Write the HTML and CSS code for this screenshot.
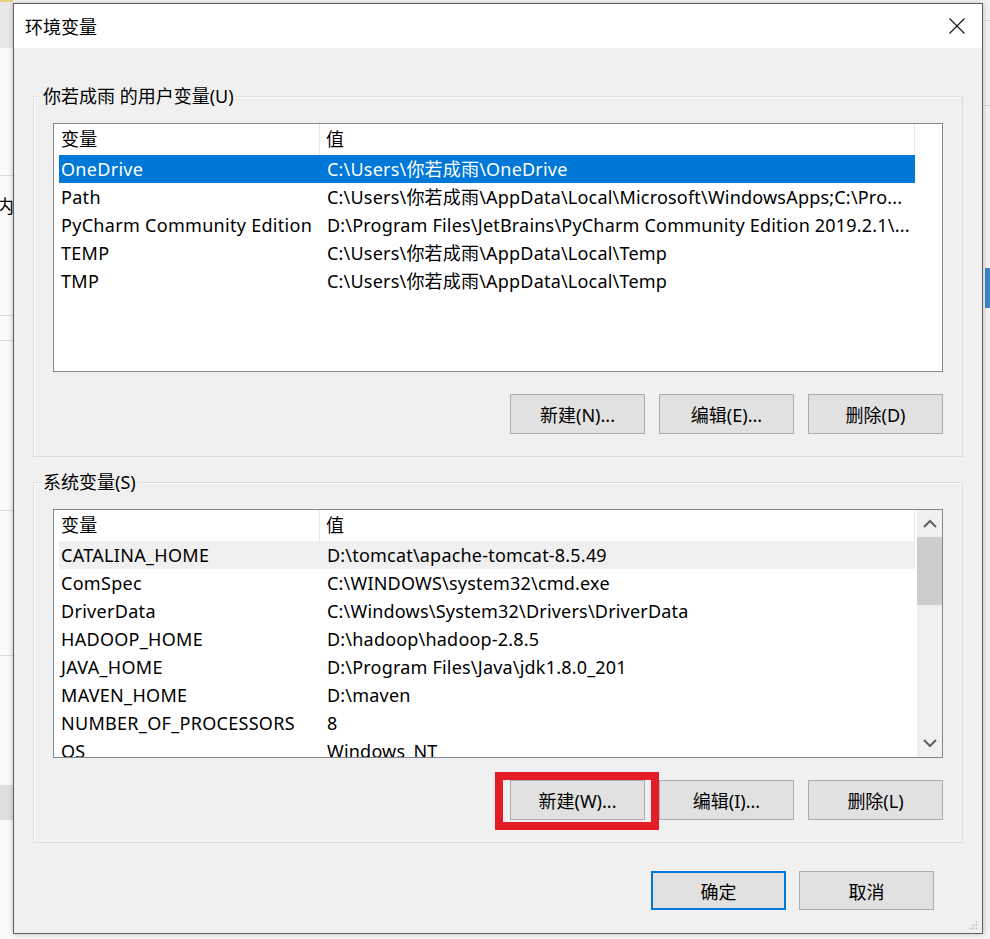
FILE: index.html
```html
<!DOCTYPE html>
<html lang="zh-CN">
<head>
<meta charset="utf-8">
<title>环境变量</title>
<link rel="stylesheet" href="styles.css">
</head>
<body>
<div class="desk">
  <div class="behind-left">
    <div class="bl-top"></div>
    <div class="bl-text"><span>L内</span></div>
  </div>
  <div class="dialog">
    <div class="titlebar">
      <span class="title">环境变量</span>
      <span class="close" aria-label="关闭">
        <svg width="16" height="16" viewBox="0 0 16 16"><path d="M0.5 0.5 L15.5 15.5 M15.5 0.5 L0.5 15.5" stroke="#111" stroke-width="1.1" fill="none"/></svg>
      </span>
    </div>
    <div class="content">
      <div class="group">
        <span class="group-label">你若成雨 的用户变量(U)</span>
        <div class="list">
          <div class="list-main">
            <div class="head">
              <div class="hcell c1">变量</div>
              <div class="hcell c2">值</div>
            </div>
            <div class="row selected"><div class="cell c1">OneDrive</div><div class="cell c2">C:\Users\你若成雨\OneDrive</div></div>
            <div class="row"><div class="cell c1">Path</div><div class="cell c2">C:\Users\你若成雨\AppData\Local\Microsoft\WindowsApps;C:\Pro...</div></div>
            <div class="row"><div class="cell c1">PyCharm Community Edition</div><div class="cell c2">D:\Program Files\JetBrains\PyCharm Community Edition 2019.2.1\...</div></div>
            <div class="row"><div class="cell c1">TEMP</div><div class="cell c2">C:\Users\你若成雨\AppData\Local\Temp</div></div>
            <div class="row"><div class="cell c1">TMP</div><div class="cell c2">C:\Users\你若成雨\AppData\Local\Temp</div></div>
          </div>
          <div class="scroll-space"></div>
        </div>
        <div class="buttons">
          <button class="btn">新建(N)...</button>
          <button class="btn">编辑(E)...</button>
          <button class="btn">删除(D)</button>
        </div>
      </div>

      <div class="group second">
        <span class="group-label">系统变量(S)</span>
        <div class="list">
          <div class="list-main">
            <div class="head">
              <div class="hcell c1">变量</div>
              <div class="hcell c2">值</div>
            </div>
            <div class="row hover"><div class="cell c1">CATALINA_HOME</div><div class="cell c2">D:\tomcat\apache-tomcat-8.5.49</div></div>
            <div class="row"><div class="cell c1">ComSpec</div><div class="cell c2">C:\WINDOWS\system32\cmd.exe</div></div>
            <div class="row"><div class="cell c1">DriverData</div><div class="cell c2">C:\Windows\System32\Drivers\DriverData</div></div>
            <div class="row"><div class="cell c1">HADOOP_HOME</div><div class="cell c2">D:\hadoop\hadoop-2.8.5</div></div>
            <div class="row"><div class="cell c1">JAVA_HOME</div><div class="cell c2">D:\Program Files\Java\jdk1.8.0_201</div></div>
            <div class="row"><div class="cell c1">MAVEN_HOME</div><div class="cell c2">D:\maven</div></div>
            <div class="row"><div class="cell c1">NUMBER_OF_PROCESSORS</div><div class="cell c2">8</div></div>
            <div class="row"><div class="cell c1">OS</div><div class="cell c2">Windows_NT</div></div>
          </div>
          <div class="scroll-space">
            <div class="scrollbar">
              <div class="arrow">
                <svg width="14" height="9" viewBox="0 0 14 9"><path d="M1 8 L7 2 L13 8" stroke="#606060" stroke-width="2" fill="none"/></svg>
              </div>
              <div class="thumb"></div>
              <div class="track"></div>
              <div class="arrow">
                <svg width="14" height="9" viewBox="0 0 14 9"><path d="M1 1 L7 7 L13 1" stroke="#606060" stroke-width="2" fill="none"/></svg>
              </div>
            </div>
          </div>
        </div>
        <div class="buttons">
          <button class="btn marked">新建(W)...</button>
          <button class="btn">编辑(I)...</button>
          <button class="btn">删除(L)</button>
        </div>
      </div>

      <div class="footer">
        <button class="btn default">确定</button>
        <button class="btn">取消</button>
      </div>
    </div>
    <div class="grip"></div>
  </div>
  <div class="behind-right">
    <div class="br-blue"></div>
  </div>
</div>
</body>
</html>
```

FILE: styles.css
```css
* { box-sizing: border-box; }

html, body {
  margin: 0;
  padding: 0;
}

body {
  font-family: "Noto Sans", "Noto Sans CJK SC", sans-serif;
  font-size: 18px;
  letter-spacing: 0.2px;
  color: #000;
  background: #f4f4f4;
}

.desk {
  width: 990px;
  height: 939px;
  display: flex;
  padding: 0;
  overflow: hidden;
  background: #f7f7f7;
}

.behind-left {
  width: 13px;
  flex: none;
  overflow: hidden;
  background:
    linear-gradient(#dcdcdc, #dcdcdc) 0 175px / 13px 1px no-repeat,
    linear-gradient(#dcdcdc, #dcdcdc) 0 315px / 13px 1px no-repeat,
    linear-gradient(#dcdcdc, #dcdcdc) 0 340px / 13px 1px no-repeat,
    linear-gradient(#dcdcdc, #dcdcdc) 0 510px / 13px 1px no-repeat,
    linear-gradient(#dcdcdc, #dcdcdc) 0 655px / 13px 1px no-repeat,
    linear-gradient(#dedede, #dedede) 0 785px / 13px 35px no-repeat,
    #fafafa;
}

.bl-top {
  height: 48px;
  background: #e9e9e9;
  border-top: 2px solid #e6d27a;
}

.bl-text {
  margin-top: 146px;
  width: 14px;
  display: flex;
  justify-content: flex-end;
  white-space: nowrap;
  overflow: hidden;
  font-family: "Noto Sans CJK SC", sans-serif;
  font-size: 18px;
  line-height: 22px;
  letter-spacing: 0;
}

.bl-text span {
  flex: none;
}

.dialog {
  flex: none;
  width: 970px;
  height: 931px;
  margin-top: 3px;
  position: relative;
  display: flex;
  flex-direction: column;
  background: #f0f0f0;
  border: 1px solid #5f5f5f;
  box-shadow: 0 0 5px rgba(0, 0, 0, 0.25);
}

.behind-right {
  flex: 1;
  background:
    linear-gradient(#d6d6d6, #d6d6d6) 0 20px / 100% 1px no-repeat,
    linear-gradient(#d6d6d6, #d6d6d6) 0 105px / 100% 1px no-repeat,
    #f2f2f2;
}

.br-blue {
  margin-top: 268px;
  margin-left: 2px;
  height: 40px;
  background: #3a86c8;
}

.titlebar {
  height: 44px;
  flex: none;
  background: #fff;
  display: flex;
  align-items: center;
  justify-content: space-between;
  padding: 0 17px 0 11px;
}

.title {
  font-family: "Noto Sans CJK SC", sans-serif;
  font-size: 18px;
  line-height: 24px;
  letter-spacing: 0;
}

.close {
  display: flex;
  width: 16px;
  height: 16px;
}

.content {
  flex: 1;
  padding: 48px 19px 0 19px;
}

.group {
  position: relative;
  border: 1px solid #dcdcdc;
  box-shadow: inset 1px 1px 0 #fbfbfb;
  padding: 26px 19px 22px 19px;
}

.group.second {
  margin-top: 25px;
  padding-bottom: 22px;
}

.group-label {
  position: absolute;
  top: -13px;
  left: 7px;
  padding: 0 2px;
  line-height: 24px;
  background: #f0f0f0;
  white-space: nowrap;
  letter-spacing: 0;
}

.list {
  height: 249px;
  border: 1px solid #828790;
  background: #fff;
  display: flex;
  overflow: hidden;
}

.list-main {
  width: 861px;
  flex: none;
  overflow: hidden;
}

.head {
  height: 31px;
  display: flex;
  align-items: center;
  border-right: 1px solid #e5e5e5;
}

.hcell {
  line-height: 31px;
  white-space: nowrap;
}

.hcell.c1 {
  width: 266px;
  padding-left: 7px;
  border-right: 1px solid #e5e5e5;
}

.hcell.c2 {
  padding-left: 6px;
}

.row {
  height: 28px;
  margin-left: 5px;
  display: flex;
  align-items: center;
  white-space: nowrap;
}

.row.selected {
  background: #0078d7;
  color: #fff;
}

.row.hover {
  background: #f0f0f0;
}

.cell {
  line-height: 28px;
  overflow: hidden;
}

.cell.c1 {
  width: 261px;
  flex: none;
  padding-left: 2px;
  letter-spacing: 0.3px;
}

.cell.c2 {
  flex: 1;
  padding-left: 7px;
}

.scroll-space {
  flex: 1;
  display: flex;
  justify-content: flex-end;
}

.scrollbar {
  width: 25px;
  display: flex;
  flex-direction: column;
  background: #f0f0f0;
}

.arrow {
  height: 27px;
  flex: none;
  display: flex;
  align-items: center;
  justify-content: center;
}

.thumb {
  height: 68px;
  flex: none;
  background: #cdcdcd;
}

.track {
  flex: 1;
}

.buttons {
  display: flex;
  justify-content: flex-end;
  gap: 14px;
  margin-top: 22px;
}

.btn {
  width: 135px;
  height: 40px;
  margin: 0;
  padding: 0;
  font-family: "Noto Sans", "Noto Sans CJK SC", sans-serif;
  font-size: 18px;
  letter-spacing: 0;
  color: #000;
  background: #e1e1e1;
  border: 1px solid #adadad;
  border-radius: 0;
}

.btn.marked {
  position: relative;
}

.btn.marked::after {
  content: "";
  position: absolute;
  left: -16px;
  right: -15px;
  top: -9px;
  bottom: -11px;
  border: 8px solid #e21d26;
}

.footer {
  display: flex;
  justify-content: flex-end;
  gap: 13px;
  margin-top: 28px;
  padding-right: 29px;
}

.footer .btn {
  height: 39px;
}

.btn.default {
  border: 2px solid #0078d7;
}

.grip {
  position: absolute;
  right: 4px;
  bottom: 3px;
  width: 10px;
  height: 10px;
  background:
    radial-gradient(circle, #b8b8b8 1px, transparent 1.2px) 0 0 / 3.4px 3.4px;
  clip-path: polygon(100% 0, 100% 100%, 0 100%);
}
```
